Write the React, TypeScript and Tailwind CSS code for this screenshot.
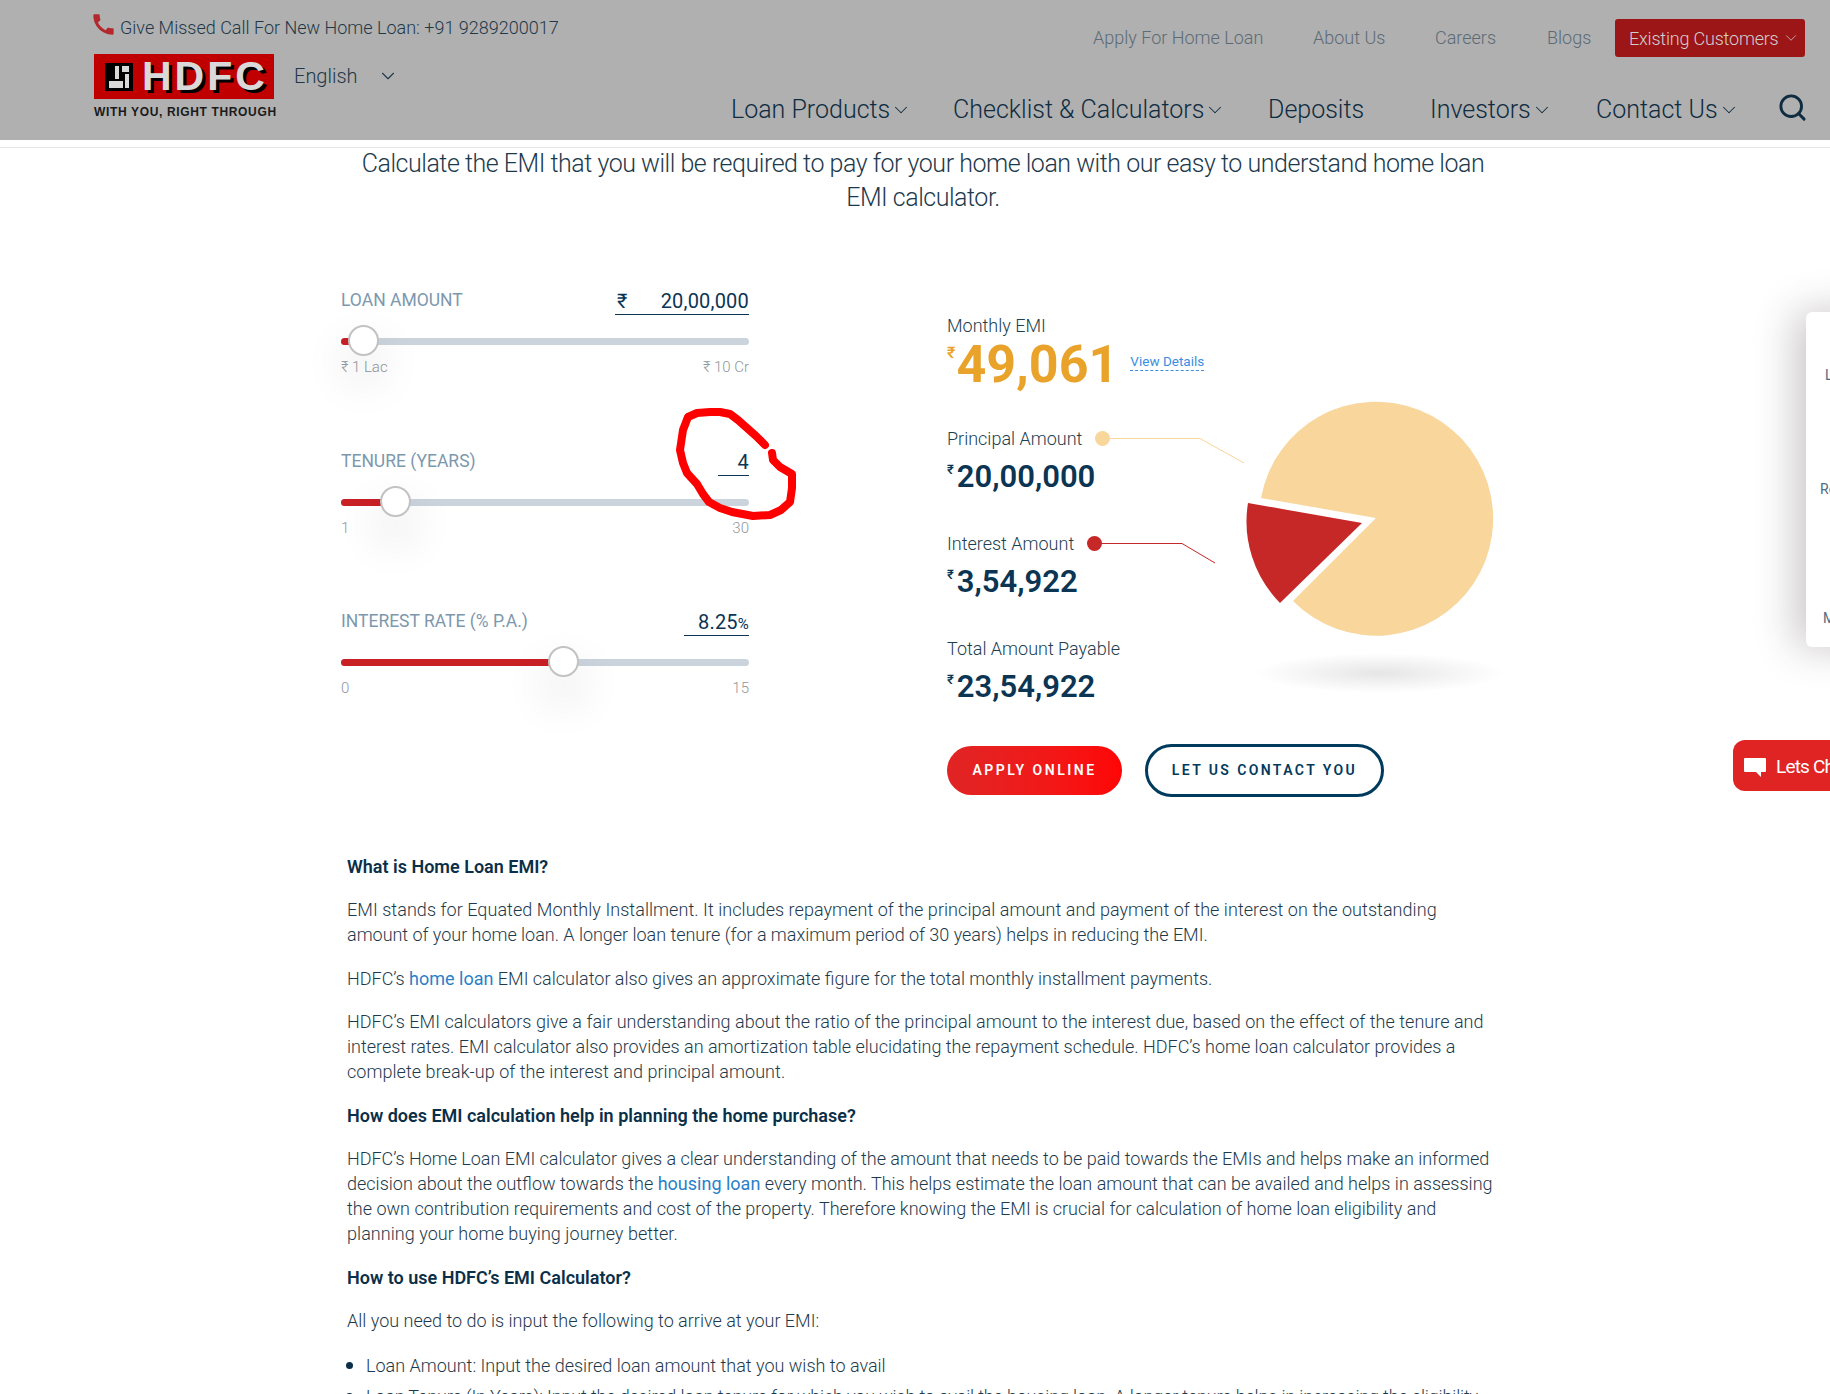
import React from "react";
import { ChevronDown, Search } from "lucide-react";
import { MdCall } from "react-icons/md";

const sliders = [
  { label: "LOAN AMOUNT", value: "20,00,000", unit: "", rupee: true, valueW: "w-[134px]", fill: "w-[22px]", thumb: "left-[7px]", min: "₹ 1 Lac", max: "₹ 10 Cr", h: "h-[161px]" },
  { label: "TENURE (YEARS)", value: "4", unit: "", rupee: false, valueW: "w-[31px]", fill: "w-[54px]", thumb: "left-[39px]", min: "1", max: "30", h: "h-[160px]" },
  { label: "INTEREST RATE (% P.A.)", value: "8.25", unit: "%", rupee: false, valueW: "w-[65px]", fill: "w-[222px]", thumb: "left-[207px]", min: "0", max: "15", h: "h-[160px]" },
];

function Slider({ s }: { s: (typeof sliders)[number] }) {
  return (
    <div className={s.h}>
      <div className="flex h-[30px] justify-between">
        <span className="text-[17.5px] font-normal leading-[30px] text-[#7d98ad]">{s.label}</span>
        <span className={`${s.valueW} flex justify-between border-b border-[#0b3553] pt-[3px] text-[20px] font-normal leading-[26px] tracking-[0.2px] text-[#0b3553]`}>
          <span className="pl-[2px]">{s.rupee ? "₹" : ""}</span>
          <span>
            {s.value}
            <span className="text-[15px]">{s.unit}</span>
          </span>
        </span>
      </div>
      <div className="relative mt-[23px] h-[7px] rounded-full bg-[#cbd3dc]">
        <div className={`${s.fill} h-[7px] rounded-full bg-[#c92026]`} />
        <div className={`${s.thumb} absolute top-[-13px] h-[31px] w-[31px] rounded-full border-2 border-[#c2c2c2] bg-white shadow-[0_22px_40px_12px_rgba(0,0,0,0.05)]`} />
      </div>
      <div className="mt-[13px] flex justify-between text-[15px] leading-[18px] text-[#8e979e]">
        <span>{s.min}</span>
        <span>{s.max}</span>
      </div>
    </div>
  );
}

function Stat({ label, value, dot }: { label: string; value: string; dot?: string }) {
  return (
    <div className="flex h-[105px] flex-col">
      <div className="mt-[-1px] flex h-[30px] items-center whitespace-nowrap text-[18px] text-[#21404f]">
        <span>{label}</span>
        {dot && <span className={`${dot} ml-auto h-[15px] w-[15px] rounded-full`} />}
      </div>
      <div className="mt-[8px] flex h-[32px] items-start text-[#0b3553]">
        <span className="mt-[1px] text-[13px] font-medium leading-[16px]">₹</span>
        <span className="ml-[3px] text-[31px] font-semibold leading-[32px]">{value}</span>
      </div>
    </div>
  );
}

const chevron = "h-[22px] w-[22px]";

export default function App() {
  return (
    <div className="relative h-[1394px] w-full overflow-hidden bg-white font-['Roboto',sans-serif] font-light text-[#1d3a4c]">
      {/* header */}
      <header className="flex h-[140px] justify-between bg-[#b0b0b0] pl-[93px] pr-[25px]">
        <div className="pt-[15px]">
          <div className="flex h-[24px] items-center">
            <MdCall className="ml-[-3px] mt-[-5px] h-[27px] w-[27px] text-[#b3282d]" />
            <span className="ml-[3px] text-[18px] text-[#1e3848]">Give Missed Call For New Home Loan: +91 9289200017</span>
          </div>
          <div className="mt-[15px] flex">
            <div className="w-[181px]">
              <div className="ml-[1px] flex h-[45px] items-center bg-[#c00000] pl-[11px]">
                <svg viewBox="0 0 28 28" className="h-[28px] w-[28px] shrink-0">
                  <rect width="28" height="28" fill="#000" />
                  <rect x="4" y="18" width="14" height="7" fill="#d9d9d9" />
                  <rect x="10" y="3" width="4" height="13" fill="#d9d9d9" />
                  <rect x="17" y="3" width="7" height="6" fill="#d9d9d9" />
                  <rect x="20" y="11" width="4" height="14" fill="#d9d9d9" />
                </svg>
                <span className="ml-[9px] font-['Liberation_Sans',sans-serif] text-[41px] font-bold leading-none tracking-[3px] text-[#d9d9d9] [text-shadow:3px_3px_0_#000]">HDFC</span>
              </div>
              <div className="ml-[1px] mt-[6px] whitespace-nowrap font-['Liberation_Sans',sans-serif] text-[12px] font-bold leading-[14px] tracking-[0.65px] text-[#1a1a1a]">WITH YOU, RIGHT THROUGH</div>
            </div>
            <div className="ml-[20px] flex h-[43px] items-center text-[20px] text-[#1e3848]">
              <span>English</span>
              <ChevronDown className="ml-[19px] h-[22px] w-[22px]" strokeWidth={1.2} />
            </div>
          </div>
        </div>
        <div className="w-[1074px] pt-[18px]">
          <div className="flex h-[38px] justify-end">
            <div className="grid w-[712px] grid-cols-[220px_122px_112px_68px_190px] items-center whitespace-nowrap text-[18px] text-[#5c6b76]">
              <span>Apply For Home Loan</span>
              <span>About Us</span>
              <span>Careers</span>
              <span>Blogs</span>
              <span className="flex h-[38px] translate-y-[1px] items-center justify-between rounded-[3px] bg-[#9c1517] pl-[14px] pr-[5px] tracking-[-0.2px] text-[#cfcfcf]">
                Existing Customers
                <ChevronDown className="h-[18px] w-[18px]" strokeWidth={1} />
              </span>
            </div>
          </div>
          <div className="mt-[35px] grid h-[36px] grid-cols-[222px_315px_162px_166px_184px_25px] items-center whitespace-nowrap text-[25px] text-[#0f2c40]">
            <span className="flex items-center">Loan Products<ChevronDown className={chevron} strokeWidth={1.1} /></span>
            <span className="flex items-center">Checklist &amp; Calculators<ChevronDown className={chevron} strokeWidth={1.1} /></span>
            <span>Deposits</span>
            <span className="flex items-center">Investors<ChevronDown className={chevron} strokeWidth={1.1} /></span>
            <span className="flex items-center">Contact Us<ChevronDown className={chevron} strokeWidth={1.1} /></span>
            <Search className="ml-[-3px] mt-[-5px] h-[31px] w-[31px]" strokeWidth={2.2} />
          </div>
        </div>
      </header>
      <div className="mt-[7px] border-t border-[#e6e6e6]" />

      {/* intro */}
      <p className="mx-auto mt-[-1px] w-[1200px] pl-[16px] text-center text-[25px] leading-[34px] tracking-[-0.48px] text-[#1d3a4c]">
        Calculate the EMI that you will be required to pay for your home loan with our easy to understand home loan
        <br />
        EMI calculator.
      </p>

      {/* calculator */}
      <section className="mt-[70px] flex pl-[341px]">
        <div className="w-[408px]">
          {sliders.map((s) => (
            <Slider key={s.label} s={s} />
          ))}
        </div>
        <div className="relative ml-[198px] w-[440px] pt-[26px]">
          <div className="h-[30px] text-[18px] leading-[30px] text-[#21404f]">Monthly EMI</div>
          <div className="mt-[-1px] flex h-[50px] items-start">
            <span className="mt-[4px] text-[16px] font-semibold leading-[18px] text-[#e9a32b]">₹</span>
            <span className="ml-[1px] text-[52px] font-bold leading-[50px] text-[#e9a32b]">49,061</span>
            <span className="ml-[12px] mt-[12px] border-b border-dashed border-[#3a8ee0] text-[13.5px] font-normal leading-[18px] text-[#3a8ee0]">View Details</span>
          </div>
          <div className="mt-[34px] w-[163px]">
            <Stat label="Principal Amount" value="20,00,000" dot="bg-[#f8d69c]" />
          </div>
          <div className="w-[155px]">
            <Stat label="Interest Amount" value="3,54,922" dot="bg-[#c62828]" />
          </div>
          <div className="w-[200px]">
            <Stat label="Total Amount Payable" value="23,54,922" />
          </div>
          <div className="mt-[5px] flex items-center">
            <span className="flex h-[49px] w-[175px] items-center justify-center rounded-full bg-gradient-to-r from-[#e02424] to-[#ff0505] text-[14px] font-semibold tracking-[2.5px] text-white">APPLY ONLINE</span>
            <span className="ml-[23px] flex h-[53px] w-[239px] items-center justify-center rounded-full border-[3px] border-[#003a5d] text-[14px] font-semibold tracking-[2.4px] text-[#003a5d]">LET US CONTACT YOU</span>
          </div>
          {/* chart */}
          <svg viewBox="1090 385 420 315" className="absolute left-[143px] top-[100px] h-[315px] w-[420px]">
            <defs>
              <radialGradient id="sh">
                <stop offset="0" stopColor="#000" stopOpacity="0.1" />
                <stop offset="1" stopColor="#000" stopOpacity="0" />
              </radialGradient>
            </defs>
            <ellipse cx="1380" cy="673" rx="125" ry="20" fill="url(#sh)" />
            <path d="M1376 518 L1261 498 A117 117 0 1 1 1293 601 Z" fill="#f8d69c" />
            <path d="M1362 523 L1248 503 A116 116 0 0 0 1280 603 Z" fill="#c62828" />
            <path d="M1101 438.5 H1200 L1244 463" fill="none" stroke="#f8d69c" strokeWidth="1" />
            <path d="M1095 543.5 H1182 L1215 563" fill="none" stroke="#c62828" strokeWidth="1" />
          </svg>
        </div>
      </section>

      {/* article */}
      <article className="ml-[347px] mt-[56.5px] w-[1150px] whitespace-nowrap text-[18px] leading-[25px] text-[#1d3a4c]">
        <p className="mb-[18.5px] font-semibold text-[#0b2f48]">What is Home Loan EMI?</p>
        <p className="mb-[18.5px]">
          <span className="tracking-[0.05px]">EMI stands for Equated Monthly Installment. It includes repayment of the principal amount and payment of the interest on the outstanding</span>
          <br />
          <span className="tracking-[-0.025px]">amount of your home loan. A longer loan tenure (for a maximum period of 30 years) helps in reducing the EMI.</span>
        </p>
        <p className="mb-[18.5px]">
          HDFC’s <span className="font-normal text-[#2a7fc9]">home loan</span> EMI calculator also gives an approximate figure for the total monthly installment payments.
        </p>
        <p className="mb-[18.5px]">
          <span className="tracking-[0.03px]">HDFC’s EMI calculators give a fair understanding about the ratio of the principal amount to the interest due, based on the effect of the tenure and</span>
          <br />
          <span className="tracking-[-0.01px]">interest rates. EMI calculator also provides an amortization table elucidating the repayment schedule. HDFC’s home loan calculator provides a</span>
          <br />
          <span className="tracking-[0.05px]">complete break-up of the interest and principal amount.</span>
        </p>
        <p className="mb-[18.5px] font-semibold text-[#0b2f48]">How does EMI calculation help in planning the home purchase?</p>
        <p className="mb-[18.5px]">
          <span className="tracking-[-0.025px]">HDFC’s Home Loan EMI calculator gives a clear understanding of the amount that needs to be paid towards the EMIs and helps make an informed</span>
          <br />
          decision about the outflow towards the <span className="font-normal text-[#2a7fc9]">housing loan</span> every month. This helps estimate the loan amount that can be availed and helps in assessing
          <br />
          <span className="tracking-[0.01px]">the own contribution requirements and cost of the property. Therefore knowing the EMI is crucial for calculation of home loan eligibility and</span>
          <br />
          <span className="tracking-[0.05px]">planning your home buying journey better.</span>
        </p>
        <p className="mb-[18.5px] font-semibold text-[#0b2f48]">How to use HDFC’s EMI Calculator?</p>
        <p className="mb-[19.5px]">All you need to do is input the following to arrive at your EMI:</p>
        <ul>
          <li className="mb-[6px] flex items-center">
            <span className="ml-[-1px] mr-[13px] h-[7px] w-[7px] shrink-0 rounded-full bg-[#0b2f48]" />
            Loan Amount: Input the desired loan amount that you wish to avail
          </li>
          <li className="flex items-center tracking-[-0.16px]">
            <span className="ml-[-1px] mr-[13px] h-[7px] w-[7px] shrink-0 rounded-full bg-[#0b2f48]" />
            Loan Tenure (In Years): Input the desired loan tenure for which you wish to avail the housing loan. A longer tenure helps in increasing the eligibility
          </li>
        </ul>
      </article>

      {/* annotation */}
      <svg viewBox="670 400 135 125" className="absolute left-[670px] top-[400px] h-[125px] w-[135px]">
        <path d="M765 445 L756 436 L747 428 L738 420 L730 414 L720 412 L710 412 L697 413 L688 417 L683 430 L680 450 L683 463 L687 473 L697 484 L703 494 L709 502 L720 508 L732 512 L753 516 L770 515 L781 510 L790 502 L792 488 L792 474 L780 467 L773 460 L772 453" fill="none" stroke="#ff0000" strokeWidth="8" strokeLinecap="round" strokeLinejoin="round" />
      </svg>

      {/* side card */}
      <div className="absolute left-[1806px] top-[312px] h-[335px] w-[100px] rounded-[6px] bg-white text-[14px] font-normal text-[#4f6b80] shadow-[-10px_0_40px_rgba(60,45,45,0.28)]">
        <span className="absolute left-[19px] top-[53px]">L</span>
        <span className="absolute left-[14px] top-[167px]">Re</span>
        <span className="absolute left-[17px] top-[296px]">M</span>
      </div>

      {/* chat */}
      <div className="absolute left-[1733px] top-[740px] flex h-[51px] w-[130px] items-center rounded-[12px] bg-[#e02424] pl-[11px] pt-[4px] text-[19px] font-normal tracking-[-0.8px] text-white">
        <svg viewBox="0 0 22 20" className="h-[20px] w-[22px] shrink-0">
          <path d="M1 0 H21 A1 1 0 0 1 22 1 V13 A1 1 0 0 1 21 14 H17 V19 L12 14 H1 A1 1 0 0 1 0 13 V1 A1 1 0 0 1 1 0 Z" fill="#fff" />
        </svg>
        <span className="ml-[10px] whitespace-nowrap">Lets Chat</span>
      </div>
    </div>
  );
}
